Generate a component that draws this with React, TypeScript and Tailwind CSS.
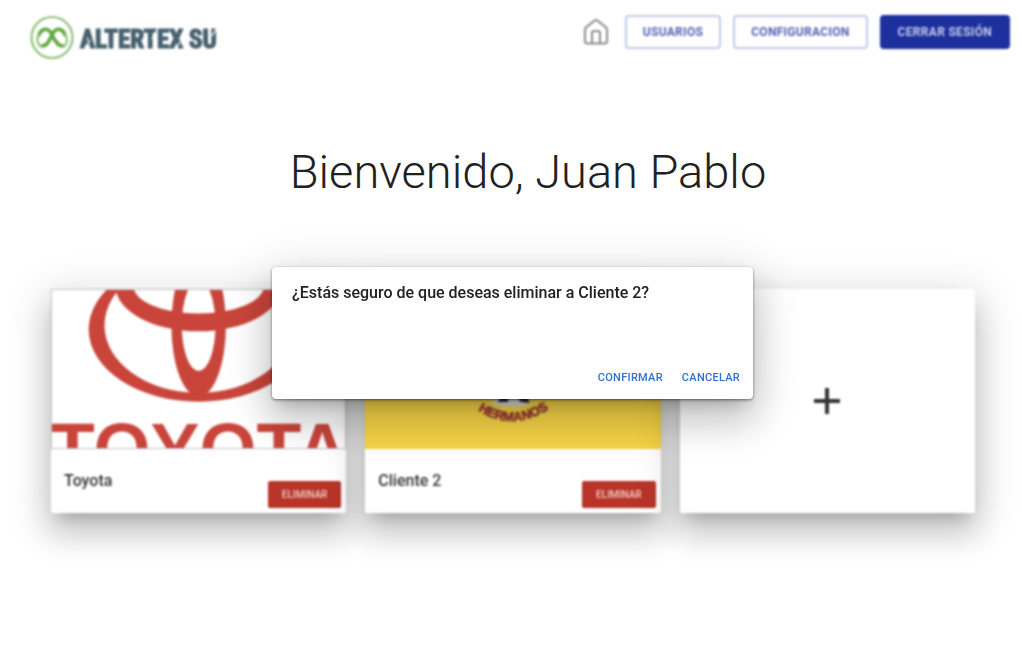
import React from "react";

const outlinedButton =
  "flex h-[34px] items-center rounded border-2 border-[#c3c9e8] bg-white px-4 text-xs font-bold tracking-wide text-[#5260b4]";

const cardShell =
  "relative flex min-w-0 flex-col bg-white rounded-xs shadow-[0_11px_15px_-7px_rgba(0,0,0,0.2),0_20px_32px_3px_rgba(0,0,0,0.14),0_9px_40px_8px_rgba(0,0,0,0.12)]";

function Logo() {
  return (
    <a href="#inicio" aria-label="Altertex SU" className="flex items-center">
      <svg width="192" height="46" viewBox="0 0 192 46">
        <circle cx="22" cy="22.500" r="20.500" fill="none" stroke="#8fbf78" strokeWidth="2.200" />
        <path
          d="M9 20 C11 14 18 11 22 20 C25 26 28 31 33 31 M35 20 C33 14 26 11 22 20 C19 26 17 31 12 31"
          fill="none"
          stroke="#5fa83f"
          strokeWidth="3.600"
          strokeLinecap="round"
        />
        <path
          d="M9 19 C6 23 7 30 12 32 M35 19 C38 23 38 29 33 32"
          fill="none"
          stroke="#8cc271"
          strokeWidth="2"
          strokeLinecap="round"
        />
        <text
          x="50"
          y="33"
          fill="#46606f"
          stroke="#46606f"
          strokeWidth="1.200"
          fontSize="25"
          fontWeight="700"
          fontFamily="'Liberation Sans Narrow', 'Roboto Condensed', 'Open Sans', sans-serif"
        >
          ALTERTEX SU
        </text>
        <path
          d="M54 36 L60 25 M122 24 L128 13 M144 37 L150 27 M182 21 L188 11"
          fill="none"
          stroke="#fff"
          strokeWidth="1.400"
        />
      </svg>
    </a>
  );
}

function HomeIcon() {
  return (
    <svg width="26" height="28" viewBox="0 0 26 28" fill="none" stroke="#8b8b8b" strokeWidth="2" strokeLinejoin="round" strokeLinecap="round">
      <path d="M2 11.500 C2 10.700 2.300 10 3 9.400 L11.600 2.500 Q13 1.400 14.400 2.500 L23 9.400 C23.700 10 24 10.700 24 11.500 V23 Q24 25.500 21.500 25.500 H4.500 Q2 25.500 2 23 Z" />
      <path d="M9 25 V15 Q9 13 11 13 H15 Q17 13 17 15 V25" />
    </svg>
  );
}

function ToyotaPicture() {
  return (
    <svg className="block h-40 w-full border border-[#c4c4c4] bg-white" viewBox="0 0 296 160" preserveAspectRatio="xMidYMid slice" role="img" aria-label="Toyota">
      <g fill="#c9453b" fillRule="evenodd">
        <path d="M37 40a111 73 0 1 0 222 0a111 73 0 1 0 -222 0Z M53 36a95 68 0 1 0 190 0a95 68 0 1 0 -190 0Z" />
        <path d="M64 -4a84 46 0 1 0 168 0a84 46 0 1 0 -168 0Z M82 -4a66 28 0 1 0 132 0a66 28 0 1 0 -132 0Z" />
        <path d="M120.500 36a27.500 72 0 1 0 55 0a27.500 72 0 1 0 -55 0Z M131 36a17 46 0 1 0 34 0a17 46 0 1 0 -34 0Z" />
      </g>
      <text x="-2" y="187" fill="#c9453b" fontSize="74" fontWeight="700" fontFamily="'Liberation Sans', Arial, sans-serif">
        TOYOTA
      </text>
    </svg>
  );
}

function HermanosPicture() {
  return (
    <svg className="block h-40 w-full bg-[#f7d546]" viewBox="0 0 296 160" preserveAspectRatio="xMidYMid slice" role="img" aria-label="Hermanos">
      <path d="M128 115 L135 104 H160 L166 115 Q147 120 128 115Z" fill="#dcdcd4" />
      <path d="M133 113 L138 103 H146 L143 113Z M150 104 H161 L165 114 L156 113Z" fill="#2e2c2c" />
      <path id="arco" d="M113 121 Q147 144 184 120" fill="none" />
      <text fill="#c8322f" stroke="#59303a" strokeWidth="0.500" fontSize="13" fontWeight="700" textAnchor="middle" fontFamily="'Liberation Sans', Arial, sans-serif">
        <textPath href="#arco" startOffset="50%">
          HERMANOS
        </textPath>
      </text>
    </svg>
  );
}

function ClientCard({ name, picture }: { name: string; picture: React.ReactNode }) {
  return (
    <article className={cardShell}>
      {picture}
      <div className="flex h-16 items-start justify-between pl-[13px] pr-[5px]">
        <h2 className="pt-5 text-base font-medium text-[#333]">{name}</h2>
        <button
          type="button"
          className="mt-8 flex h-[27px] items-center rounded-xs bg-[#b83428] px-[14px] text-[10px] font-medium text-[#f0cfcb]"
        >
          ELIMINAR
        </button>
      </div>
    </article>
  );
}

export default function App() {
  return (
    <div className="min-h-screen bg-white pb-16 font-['Roboto',sans-serif] text-[#212121]">
      <header className="flex items-start justify-between pl-[30px] pr-3 pt-[15px] blur-[1px]">
        <Logo />
        <nav className="flex items-center gap-3">
          <a href="#inicio" aria-label="Inicio" className="mr-1">
            <HomeIcon />
          </a>
          <button type="button" className={outlinedButton}>
            USUARIOS
          </button>
          <button type="button" className={outlinedButton}>
            CONFIGURACION
          </button>
          <button
            type="button"
            className="flex h-[34px] items-center rounded bg-[#1e2f9e] px-[18px] text-xs font-bold tracking-wide text-[#c5cbea]"
          >
            CERRAR SESIÓN
          </button>
        </nav>
      </header>

      <main>
        <h1 className="pl-[34px] pt-[83px] text-center text-[47px] leading-[56px] font-light">Bienvenido, Juan Pablo</h1>
        <section className="mt-[89px] grid grid-cols-3 gap-[19px] pl-[51px] pr-[47px] blur-[1px]">
          <ClientCard name="Toyota" picture={<ToyotaPicture />} />
          <ClientCard name="Cliente 2" picture={<HermanosPicture />} />
          <button type="button" aria-label="Agregar cliente" className={`${cardShell} items-center justify-center`}>
            <svg width="28" height="28" viewBox="0 0 28 28" stroke="#333" strokeWidth="4">
              <path d="M14 1V27M1 14H27" />
            </svg>
          </button>
        </section>
      </main>

      <div className="fixed inset-0 flex items-center justify-center pt-[3px] pl-[3px]">
        <div
          role="dialog"
          aria-modal="true"
          aria-labelledby="pregunta"
          className="flex min-h-[132px] w-full max-w-[481px] flex-col justify-between rounded bg-white shadow-[0_11px_15px_-7px_rgba(0,0,0,0.2),0_24px_38px_3px_rgba(0,0,0,0.14),0_9px_46px_8px_rgba(0,0,0,0.12),0_1px_3px_rgba(0,0,0,0.5)]"
        >
          <h2 id="pregunta" className="px-5 pt-[14px] text-base font-medium">
            ¿Estás seguro de que deseas eliminar a Cliente 2?
          </h2>
          <div className="flex justify-end gap-[19px] px-[13px] pb-3 text-[11px] leading-[18px] font-medium tracking-wide text-[#2f70d0]">
            <button type="button">CONFIRMAR</button>
            <button type="button">CANCELAR</button>
          </div>
        </div>
      </div>
    </div>
  );
}
